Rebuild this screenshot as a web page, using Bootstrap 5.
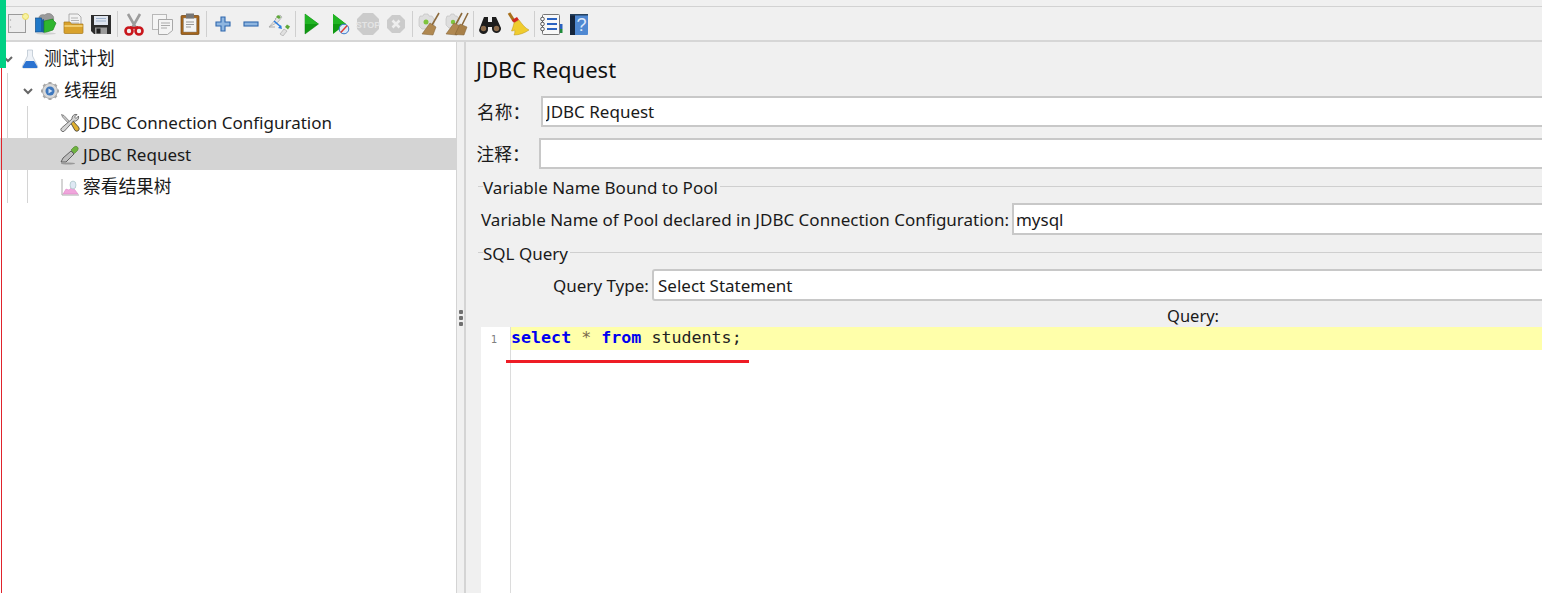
<!DOCTYPE html>
<html lang="zh">
<head>
<meta charset="utf-8">
<title>JDBC Request</title>
<link href="https://cdn.jsdelivr.net/npm/bootstrap@5.3.0/dist/css/bootstrap.min.css" rel="stylesheet">
<style>
html,body{height:100%;overflow:hidden;}
body{background:#f0f0f0;font-family:"Noto Sans","Noto Sans CJK SC",sans-serif;font-size:17px;line-height:1.2;color:#1a1a1a;}
.app-shell{height:593px;width:1542px;overflow:hidden;position:relative;}
.top-strip{height:6px;}
.tool-bar{height:36px;border-top:1px solid #d2d2d2;border-bottom:2px solid #d6d6d6;padding-left:3px;}
.tool-slot{width:28px;height:33px;display:flex;align-items:center;justify-content:center;flex:none;}
.tool-sep{width:1px;height:26px;background:#cfcfcf;margin:0 2px;flex:none;}
.main-area{height:551px;}
.tree-pane{width:457px;background:#fff;border-right:1px solid #d4d4d4;flex:none;position:relative;}
.split-bar{width:9px;border-right:2px solid #d4d4d4;flex:none;gap:2px;}
.split-dot{width:4px;height:4px;background:#707070;border-radius:1px;margin-left:2px;}
.tree-row{height:32px;padding-right:8px;padding-top:1px;}
.tree-row.is-sel{background:#d4d4d4;}
.lvl-0{padding-left:3px;}
.lvl-1{padding-left:23px;}
.lvl-2{padding-left:60px;}
.tree-chev{width:10px;margin-right:8px;flex:none;}
.lvl-1 .tree-chev{margin-right:7px;}
.tree-ico{flex:none;margin-right:3px;}
.lvl-0 .tree-ico{margin-right:5px;}
.lvl-1 .tree-ico{margin-right:4px;}
.cjk-txt{font-size:17.7px;}
.nudge-down{padding-top:2px;}
.nudge-more{padding-top:3px;}
.tree-guide{position:absolute;top:31px;bottom:390px;width:1px;background:#d4d4d4;}
.guide-a{left:7px;}
.guide-b{left:27px;top:64px;}
.accent-green{position:absolute;left:0;top:0;width:6px;height:68px;background:#00d084;}
.accent-red{position:absolute;left:1px;top:68px;bottom:0;width:1px;background:#e0232b;}
.form-pane{flex:1;min-width:0;padding-left:10px;margin-right:-12px;}
.pane-title{font-size:22px;font-weight:400;margin:0;height:54px;display:flex;align-items:center;color:#111;}
.field-row{height:31px;}
.field-row-tall{height:32px;}
.note-row{margin-top:11px;}
.field-input{border:2px solid #c8c8c8;border-radius:0;height:31px;padding:0 3px;font-size:17px;color:#1a1a1a;background:#fff;box-shadow:none;}
.field-tall{height:32px;}
.name-lbl{margin-left:1px;width:64px;flex:none;}
.note-lbl{width:62.500px;margin-left:.5px;flex:none;}
.grp-head{height:32px;margin-left:2px;margin-top:2px;}
.grp-tick{width:5px;height:1px;background:#cfcfcf;flex:none;margin-top:-2px;}
.grp-line{height:1px;background:#cfcfcf;flex:1;margin-left:2px;margin-top:-2px;}
.grp-text{flex:none;}
.pool-lbl{margin-left:5px;margin-right:3px;flex:none;}
.pool-input{padding-left:2px;}
.type-lbl{margin-left:77px;margin-right:3px;flex:none;width:96px;}
.query-sel{border-radius:3px;padding-left:4px;}
.query-cap{height:26px;font-size:16.500px;padding-left:691px;padding-bottom:1px;}
.code-box{margin-left:5px;height:266px;background:#fff;}
.code-gutter{width:30px;border-right:1px solid #dcdcdc;flex:none;text-align:right;padding-right:13px;font-family:"DejaVu Sans Mono",monospace;font-size:10.5px;color:#808080;padding-top:6px;}
.code-body{flex:1;position:relative;}
.code-line{height:23px;background:#ffffaa;font-family:"DejaVu Sans Mono",monospace;font-size:16.67px;line-height:21px;color:#222;white-space:pre;}
.kw{color:#0000f0;font-weight:700;}
.op{color:#7a6a4a;}
.red-mark{position:absolute;left:-5px;top:33px;width:243px;height:3px;background:#ee1c25;}
</style>
</head>
<body>
<div class="app-shell d-flex flex-column">
  <div class="top-strip"></div>
  <div class="tool-bar d-flex align-items-center">
    <div class="tool-slot"><svg width="24" height="24" viewBox="0 0 24 24"><rect x="3.500" y="2.500" width="17" height="18" fill="#ececec" stroke="#9a9a9a"/><circle cx="5.500" cy="8" r=".7" fill="#aaa"/><circle cx="5.500" cy="15" r=".7" fill="#aaa"/><circle cx="20.500" cy="4.500" r="3" fill="#f7f2a0" stroke="#e8d860"/></svg></div>
    <div class="tool-slot"><svg width="24" height="24" viewBox="0 0 24 24"><path d="M6 6c0-3 3-4 6-3 1-2 6-2 7 0 2 1 2 4 1 7H7z" fill="#9a9a9a" stroke="#777" stroke-width=".6"/><rect x="2.500" y="6" width="6" height="14" fill="#1f78c8" stroke="#134f8a" stroke-width=".7"/><path d="M8 8l3-1v14l-3-1z" fill="#1a5fa6"/><path d="M11 9l9-2v1l3 3-3 7-9 3z" fill="#2fb52f" stroke="#1a7e1a" stroke-width=".6"/><ellipse cx="13" cy="21.500" rx="10" ry="1.200" fill="#bbb" opacity=".6"/></svg></div>
    <div class="tool-slot"><svg width="24" height="24" viewBox="0 0 24 24"><path d="M8 2h9l3 3v8H8z" fill="#f2f2f2" stroke="#9c9c9c" stroke-width=".8"/><path d="M10 6h7M10 8.500h8M10 11h8" stroke="#aaa" stroke-width=".9"/><path d="M3 10h6l1.500 2H22v8.500q0 1-1 1H4q-1 0-1-1z" fill="#d9a22c" stroke="#a87a1c" stroke-width=".7"/><path d="M3.500 14h18" stroke="#efcb6c" stroke-width="2"/></svg></div>
    <div class="tool-slot"><svg width="24" height="24" viewBox="0 0 24 24"><path d="M2 3h20v19H5l-3-3z" fill="#2c2c2c"/><rect x="5" y="4" width="14" height="9" fill="#dfe5ef"/><path d="M7 6.500h10M7 9h10" stroke="#9fb3cc" stroke-width="1"/><rect x="6" y="15.500" width="12" height="6.500" fill="#9a9a9a"/><rect x="7.500" y="16.500" width="4" height="5" fill="#222"/></svg></div>
    <div class="tool-sep"></div>
    <div class="tool-slot"><svg width="24" height="24" viewBox="0 0 24 24"><path d="M6 2l8 14M18 2l-8 14" stroke="#9c9c9c" stroke-width="2.600" fill="none"/><circle cx="7" cy="19" r="3.500" fill="none" stroke="#c9161c" stroke-width="2.600"/><circle cx="17" cy="19" r="3.500" fill="none" stroke="#c9161c" stroke-width="2.600"/><path d="M8 15l4 1 4-1" stroke="#c9161c" stroke-width="2" fill="none"/></svg></div>
    <div class="tool-slot"><svg width="24" height="24" viewBox="0 0 24 24"><rect x="2.500" y="2.500" width="14" height="15" fill="#f5f5f5" stroke="#b8b8b8"/><path d="M8.500 7.500h14v11l-5 4h-9z" fill="#f4f4f4" stroke="#a8a8a8"/><path d="M11 11h9M11 13.500h9M11 16h6" stroke="#aaa"/></svg></div>
    <div class="tool-slot"><svg width="24" height="24" viewBox="0 0 24 24"><rect x="3" y="3.500" width="18" height="19" rx="1" fill="#a5661c" stroke="#6f4212" stroke-width=".7"/><path d="M5.500 6h13v14h-13z" fill="#f4f4f4" stroke="#888" stroke-width=".5"/><path d="M8 1.500h8v5H8z" fill="#777"/><path d="M8 10h8M8 12.500h8M8 15h5" stroke="#999"/></svg></div>
    <div class="tool-sep"></div>
    <div class="tool-slot"><svg width="24" height="24" viewBox="0 0 24 24"><path d="M10 5h4v5h5v4h-5v5h-4v-5H5v-4h5z" fill="#8fb6e0" stroke="#2f67ad" stroke-width="1.100"/></svg></div>
    <div class="tool-slot"><svg width="24" height="24" viewBox="0 0 24 24"><rect x="5" y="10" width="14" height="4" fill="#8fb6e0" stroke="#2f67ad" stroke-width="1.100"/></svg></div>
    <div class="tool-slot"><svg width="24" height="24" viewBox="0 0 24 24"><path d="M2 15l7-8h-1l5-4 2 2-4 5z" fill="#e6e6e6" stroke="#a5a5a5" stroke-width=".7"/><path d="M11 3l3 2-2 2-3-2z" fill="#5fa83a"/><path d="M2 15h6" stroke="#aaa"/><path d="M7 9l7 6" stroke="#2b7de0" stroke-width="1.600"/><path d="M15 17l-1-4-3 3z" fill="#2b7de0"/><path d="M13 22l4-5 3 2-4 5z" fill="#e0e0e0" stroke="#a5a5a5" stroke-width=".6"/><path d="M18 15l3 2.500 2-3-3-2z" fill="#5fa83a"/></svg></div>
    <div class="tool-sep"></div>
    <div class="tool-slot"><svg width="24" height="24" viewBox="0 0 24 24"><path d="M5 2l13.500 10L5 22z" fill="#0f9a12" stroke="#0a7a0c" stroke-width=".5"/><path d="M5 2l13.500 10H5z" fill="#21b524"/></svg></div>
    <div class="tool-slot"><svg width="24" height="24" viewBox="0 0 24 24"><path d="M5 2l13 10L5 22z" fill="#0f9a12"/><path d="M5 2l13 10H5z" fill="#21b524"/><circle cx="16" cy="17" r="4.800" fill="#dce9f8" stroke="#3a78c9" stroke-width="1"/><path d="M12.800 20.500l6.400-7" stroke="#e0392f" stroke-width="1.400"/></svg></div>
    <div class="tool-slot"><svg width="24" height="24" viewBox="0 0 24 24"><path d="M7 1h10l6 6v10l-6 6H7l-6-6V7z" fill="#cbcbcb"/><text x="12" y="15.500" text-anchor="middle" font-family="Liberation Sans,sans-serif" font-size="9" font-weight="700" fill="#e4e4e4">STOP</text></svg></div>
    <div class="tool-slot"><svg width="24" height="24" viewBox="0 0 24 24"><path d="M8 3h8l5 5v8l-5 5H8l-5-5V8z" fill="#cbcbcb"/><path d="M8.500 8.500l7 7M15.500 8.500l-7 7" stroke="#eee" stroke-width="2.600"/></svg></div>
    <div class="tool-sep"></div>
    <div class="tool-slot"><svg width="24" height="24" viewBox="0 0 24 24"><path d="M3 4h3l1-2h4l1 2h3l2 3v7l-2 3H5l-3-3V7z" fill="#dedede" stroke="#b5b5b5" stroke-width=".5"/><circle cx="9" cy="10" r="2.500" fill="#7ec43c"/><path d="M22 1l-7 12" stroke="#8c6a3c" stroke-width="1.600"/><path d="M13 11l6 4-3 8-11-1z" fill="#b08850" stroke="#7c5c30" stroke-width=".5"/></svg></div>
    <div class="tool-slot"><svg width="24" height="24" viewBox="0 0 24 24"><path d="M2 4h3l1-2h3l1 2h2l2 3v6l-3 3H4l-3-3V7z" fill="#dedede" stroke="#b5b5b5" stroke-width=".5"/><circle cx="8" cy="10" r="2.200" fill="#7ec43c"/><path d="M17 1l-6 11M23 1l-6 12" stroke="#8c6a3c" stroke-width="1.600"/><path d="M9 11l6 3-3 9-11-1z" fill="#b08850" stroke="#7c5c30" stroke-width=".5"/><path d="M15 12l7 3-3 8-9-.5z" fill="#a88048" stroke="#7c5c30" stroke-width=".5"/></svg></div>
    <div class="tool-sep"></div>
    <div class="tool-slot"><svg width="24" height="24" viewBox="0 0 24 24"><path d="M6 5h4v5h4V5h4l5 11a4.500 4.500 0 0 1-9 1v-2h-4v2a4.500 4.500 0 0 1-9 1z" fill="#1d1d1d"/><circle cx="5.500" cy="16.500" r="2.700" fill="#8a6a4a"/><circle cx="18.500" cy="16.500" r="2.700" fill="#8a6a4a"/></svg></div>
    <div class="tool-slot"><svg width="24" height="24" viewBox="0 0 24 24"><path d="M3 1l5 8" stroke="#a8701c" stroke-width="3"/><path d="M6 8l5-3 2 3-5 3z" fill="#d4261e"/><path d="M8 11l5-3c3 4 6 8 10 10-4 3-10 5-15 5 1-2 1-4 .500-5-1 1-2 1-3 1 1-3 2-5 2.500-8z" fill="#f0cc2e" stroke="#b8941c" stroke-width=".5"/></svg></div>
    <div class="tool-sep"></div>
    <div class="tool-slot"><svg width="24" height="24" viewBox="0 0 24 24"><rect x="3.500" y="2.500" width="17" height="20" rx="1" fill="#f8f8f8" stroke="#777"/><path d="M8 7h10M8 12h10M8 17h10" stroke="#2a62c0" stroke-width="1.800"/><circle cx="3.500" cy="7" r="1.800" fill="#fff" stroke="#333" stroke-width=".8"/><circle cx="3.500" cy="12" r="1.800" fill="#fff" stroke="#333" stroke-width=".8"/><circle cx="3.500" cy="17" r="1.800" fill="#fff" stroke="#333" stroke-width=".8"/><rect x="21" y="12" width="2.500" height="5" fill="#2a62c0"/><rect x="21" y="17" width="2.500" height="4" fill="#1f8a3a"/></svg></div>
    <div class="tool-slot"><svg width="24" height="24" viewBox="0 0 24 24"><rect x="3" y="2" width="18" height="21" rx="1" fill="#4f88d2"/><rect x="3" y="2" width="5" height="21" fill="#15253c"/><rect x="3" y="2" width="18" height="1.500" fill="#26425f"/><text x="14.500" y="19" text-anchor="middle" font-family="Liberation Sans,sans-serif" font-size="18" fill="#dfeafa">?</text></svg></div>
  </div>
  <div class="main-area d-flex">
    <div class="tree-pane">
      <div class="tree-guide guide-a"></div>
      <div class="tree-guide guide-b"></div>
      <div class="tree-row lvl-0 d-flex align-items-center">
        <svg class="tree-chev" viewBox="0 0 10 10" height="10"><path d="M1 3l4 4 4-4" fill="none" stroke="#666" stroke-width="2"/></svg>
        <svg class="tree-ico" width="18" height="20" viewBox="0 0 18 20"><path d="M6.500 1h5v6l5 10q1 2-1 2H2.500q-2 0-1-2l5-10z" fill="#eef2f7" stroke="#b4c0cc" stroke-width=".7"/><path d="M5 12h8l3 5q1 2-1 2H3q-2 0-1-2z" fill="#2a72d0"/></svg>
        <span class="cjk-txt">测试计划</span>
      </div>
      <div class="tree-row lvl-1 d-flex align-items-center">
        <svg class="tree-chev" viewBox="0 0 10 10" height="10"><path d="M1 3l4 4 4-4" fill="none" stroke="#666" stroke-width="2"/></svg>
        <svg class="tree-ico" width="20" height="20" viewBox="0 0 20 20"><g stroke="#a8a8a8" stroke-width="3"><path d="M10 1v18M1 10h18M3.600 3.600l12.800 12.800M16.400 3.600L3.600 16.400"/></g><circle cx="10" cy="10" r="7.500" fill="#d8d8d8" stroke="#999" stroke-width=".7"/><circle cx="10" cy="10" r="4.500" fill="#3f78bd"/><path d="M8.500 7.500l4 2.500-4 2.500z" fill="#cfe0f4"/></svg>
        <span class="cjk-txt">线程组</span>
      </div>
      <div class="tree-row lvl-2 d-flex align-items-center">
        <svg class="tree-ico" width="20" height="20" viewBox="0 0 20 20"><path d="M1.500 1.500l2.500 1 7 7.500-1.500 1.500L2.500 4z" fill="#c8c8c8" stroke="#555" stroke-width=".6"/><path d="M10.500 9.500l2-2 6 6.500q1.500 2 0 3.500t-3.500 0z" fill="#e0b030" stroke="#333" stroke-width=".8"/><path d="M12 6a4 4 0 0 1 5-4.500l-2.500 2.500 1.500 1.500 2.500-2.500a4 4 0 0 1-5 5L4.500 18q-1.500 1.500-3 0t0-3z" fill="#d4d4d4" stroke="#555" stroke-width=".8"/></svg>
        <span class="nudge-down">JDBC Connection Configuration</span>
      </div>
      <div class="tree-row is-sel lvl-2 d-flex align-items-center">
        <svg class="tree-ico" width="20" height="20" viewBox="0 0 20 20"><path d="M1 17l2-4 8-7 3 3-8 8z" fill="#bdbdbd" stroke="#444" stroke-width=".8"/><path d="M11 5l3-3q2-1.500 3.500 0t0 3.500l-3 3z" fill="#6fb33f" stroke="#4a7f2a" stroke-width=".6"/><ellipse cx="8" cy="18.500" rx="7" ry="1" fill="#999"/></svg>
        <span class="nudge-down">JDBC Request</span>
      </div>
      <div class="tree-row lvl-2 d-flex align-items-center">
        <svg class="tree-ico" width="20" height="20" viewBox="0 0 20 20"><path d="M2 2v16h17" fill="none" stroke="#aaa"/><path d="M3 17l3-5 3 1 3-3 3 3 3 4z" fill="#f0a5dc" stroke="#d87cc0" stroke-width=".5"/><ellipse cx="13" cy="8" rx="3" ry="4" fill="#dfe8f4" stroke="#9bb" stroke-width=".6"/></svg>
        <span class="cjk-txt">察看结果树</span>
      </div>
    </div>
    <div class="split-bar d-flex flex-column justify-content-center"><div class="split-dot"></div><div class="split-dot"></div><div class="split-dot"></div></div>
    <div class="form-pane">
      <h1 class="pane-title">JDBC Request</h1>
      <div class="field-row d-flex align-items-center">
        <span class="name-lbl cjk-txt nudge-down">名称：</span>
        <input class="form-control field-input" value="JDBC Request">
      </div>
      <div class="field-row note-row d-flex align-items-center">
        <span class="note-lbl cjk-txt nudge-more">注释：</span>
        <input class="form-control field-input" value="">
      </div>
      <div class="grp-head d-flex align-items-center">
        <span class="grp-tick"></span><span class="grp-text nudge-down">Variable Name Bound to Pool</span><span class="grp-line"></span>
      </div>
      <div class="field-row-tall d-flex align-items-center">
        <span class="pool-lbl nudge-down">Variable Name of Pool declared in JDBC Connection Configuration:</span>
        <input class="form-control field-input field-tall pool-input" value="mysql">
      </div>
      <div class="grp-head d-flex align-items-center">
        <span class="grp-tick"></span><span class="grp-text nudge-down">SQL Query</span><span class="grp-line"></span>
      </div>
      <div class="field-row-tall d-flex align-items-center">
        <span class="type-lbl nudge-down">Query Type:</span>
        <input class="form-control field-input field-tall query-sel" value="Select Statement">
      </div>
      <div class="query-cap d-flex align-items-end">Query:</div>
      <div class="code-box d-flex">
        <div class="code-gutter">1</div>
        <div class="code-body">
          <div class="code-line"><span class="kw">select</span> <span class="op">*</span> <span class="kw">from</span> students;</div>
          <div class="red-mark"></div>
        </div>
      </div>
    </div>
  </div>
  <div class="accent-green"></div>
  <div class="accent-red"></div>
</div>
</body>
</html>
